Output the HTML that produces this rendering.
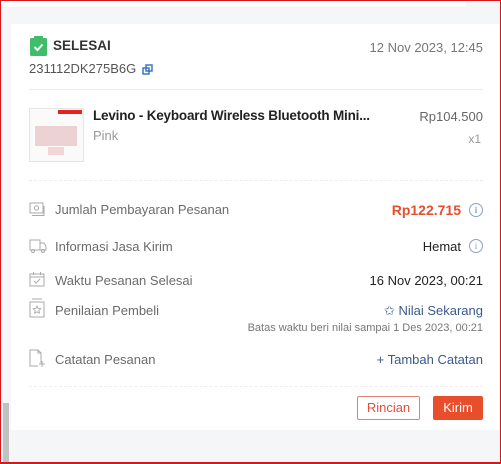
<!DOCTYPE html>
<html><head><style>
*{margin:0;padding:0;box-sizing:border-box}
body{width:501px;height:464px;overflow:hidden;background:#f5f6f8;font-family:"Liberation Sans",Arial,sans-serif;position:relative}
.frame{position:absolute;left:0;top:0;width:501px;height:464px;border:1px solid #d8161b;border-bottom-width:2px;pointer-events:none;z-index:5}
.topw{position:absolute;left:1px;top:1px;width:465px;height:6px;background:#fff}
.card{position:absolute;left:11px;top:24px;width:489px;height:406px;background:#fff}
.sb{position:absolute;left:3px;top:403px;width:6px;height:60px;background:#c1c1c1}
.a{position:absolute;white-space:nowrap}
.lbl{font-size:13px;color:#6b6b6b;left:55px}
.ic{position:absolute;left:29px}
.sep{position:absolute;left:29px;width:454px;border-top:1px solid #eee}
.dsep{position:absolute;left:29px;width:454px;border-top:1px dashed #eee}
.row{display:flex;align-items:center;height:18px}
.info{display:block;width:14px;height:14px;border:1px solid #8aa0c8;border-radius:50%;font-size:9px;color:#8aa0c8;text-align:center;line-height:12px;margin-left:8px;font-family:"Liberation Serif",serif}
</style></head><body>
<div class="topw"></div>
<div class="card"></div>
<div class="sb"></div>
<div class="frame"></div>

<svg class="ic" style="top:36px;left:30px" width="17" height="20" viewBox="0 0 17 20"><rect x="0" y="2" width="17" height="18" rx="1.5" fill="#3fbd6a"/><rect x="4" y="0" width="9" height="4" rx="1" fill="#3fbd6a"/><path d="M4.5 11l3 3 5-5.5" stroke="#fff" stroke-width="2" fill="none"/></svg>
<div class="a" style="left:53px;top:38px;font-size:13.5px;font-weight:bold;color:#333">SELESAI</div>
<div class="a" style="left:29px;top:61px;font-size:13px;color:#555">231112DK275B6G</div>
<svg class="a" style="left:142px;top:64px" width="11" height="11" viewBox="0 0 11 11"><rect x="1" y="4" width="6" height="6" fill="none" stroke="#2f6fc0" stroke-width="1.4"/><rect x="4" y="1" width="6" height="6" fill="none" stroke="#2f6fc0" stroke-width="1.4"/></svg>
<div class="a" style="right:18px;top:40px;font-size:13px;color:#777">12 Nov 2023, 12:45</div>
<div class="sep" style="top:89px"></div>

<div class="a" style="left:29px;top:108px;width:55px;height:54px;border:1px solid #e5e5e5;background:#fafafa">
<div style="position:absolute;right:1px;top:1px;width:24px;height:4px;background:#e02424"></div>
<div style="position:absolute;left:5px;top:17px;width:42px;height:20px;background:#ecd2d2"></div>
<div style="position:absolute;left:18px;top:38px;width:16px;height:8px;background:#f2d6d6"></div>
</div>
<div class="a" style="left:93px;top:108px;font-size:13.5px;font-weight:bold;color:#222;letter-spacing:-0.2px">Levino - Keyboard Wireless Bluetooth Mini...</div>
<div class="a" style="left:93px;top:128px;font-size:13px;color:#999">Pink</div>
<div class="a" style="right:18px;top:109px;font-size:13px;color:#666">Rp104.500</div>
<div class="a" style="right:20px;top:132px;font-size:12px;color:#999">x1</div>
<div class="dsep" style="top:180px"></div>

<svg class="ic" style="top:202px" width="17" height="15" viewBox="0 0 17 15" fill="none" stroke="#aaa"><rect x="1" y="1" width="13" height="10"/><circle cx="7.5" cy="6" r="2.2"/><path d="M3 13.5h12V4"/></svg>
<div class="a lbl" style="top:202px">Jumlah Pembayaran Pesanan</div>
<div class="a row" style="right:18px;top:201px;font-size:14px;font-weight:bold;color:#e94e2c">Rp122.715<span class="info">i</span></div>

<svg class="ic" style="top:239px" width="18" height="15" viewBox="0 0 18 15" fill="none" stroke="#aaa"><path d="M1 1h10v10H1zM11 4h4l2 3v4h-6"/><circle cx="4" cy="12" r="1.5"/><circle cx="14" cy="12" r="1.5"/></svg>
<div class="a lbl" style="top:239px">Informasi Jasa Kirim</div>
<div class="a row" style="right:18px;top:237px;font-size:13px;color:#222">Hemat<span class="info">i</span></div>

<svg class="ic" style="top:271px" width="16" height="16" viewBox="0 0 16 16" fill="none" stroke="#aaa"><rect x="1" y="3" width="14" height="12"/><path d="M1 6h14M4.5 1v3M11.5 1v3M5 10l2 2 4-4"/></svg>
<div class="a lbl" style="top:273px">Waktu Pesanan Selesai</div>
<div class="a" style="right:18px;top:273px;font-size:13px;color:#222">16 Nov 2023, 00:21</div>

<svg class="ic" style="top:298px" width="16" height="20" viewBox="0 0 16 20" fill="none" stroke="#aaa"><path d="M3 1h10"/><rect x="1" y="4" width="14" height="15"/><path d="M8 8l1.2 2.4 2.5.3-1.8 1.8.5 2.5L8 13.8 5.6 15l.5-2.5-1.8-1.8 2.5-.3z" stroke-width=".9"/></svg>
<div class="a lbl" style="top:303px">Penilaian Pembeli</div>
<div class="a" style="right:18px;top:303px;font-size:13px;color:#3a5a8c">✩ Nilai Sekarang</div>
<div class="a" style="right:18px;top:322px;font-size:11px;color:#777">Batas waktu beri nilai sampai 1 Des 2023, 00:21</div>

<svg class="ic" style="top:349px" width="18" height="18" viewBox="0 0 18 18" fill="none" stroke="#aaa"><path d="M12 14V4L9 1H1v16h8M9 1v3h3M13 12v6M10 15h6"/></svg>
<div class="a lbl" style="top:352px">Catatan Pesanan</div>
<div class="a" style="right:18px;top:352px;font-size:13px;color:#3a5a8c">+ Tambah Catatan</div>
<div class="dsep" style="top:386px"></div>

<div class="a" style="left:357px;top:396px;width:63px;height:24px;border:1px solid #e08070;border-radius:2px;font-size:13px;color:#e05040;text-align:center;line-height:22px">Rincian</div>
<div class="a" style="left:433px;top:396px;width:50px;height:24px;background:#e94e2c;border-radius:2px;font-size:13px;color:#fff;text-align:center;line-height:24px">Kirim</div>
</body></html>
